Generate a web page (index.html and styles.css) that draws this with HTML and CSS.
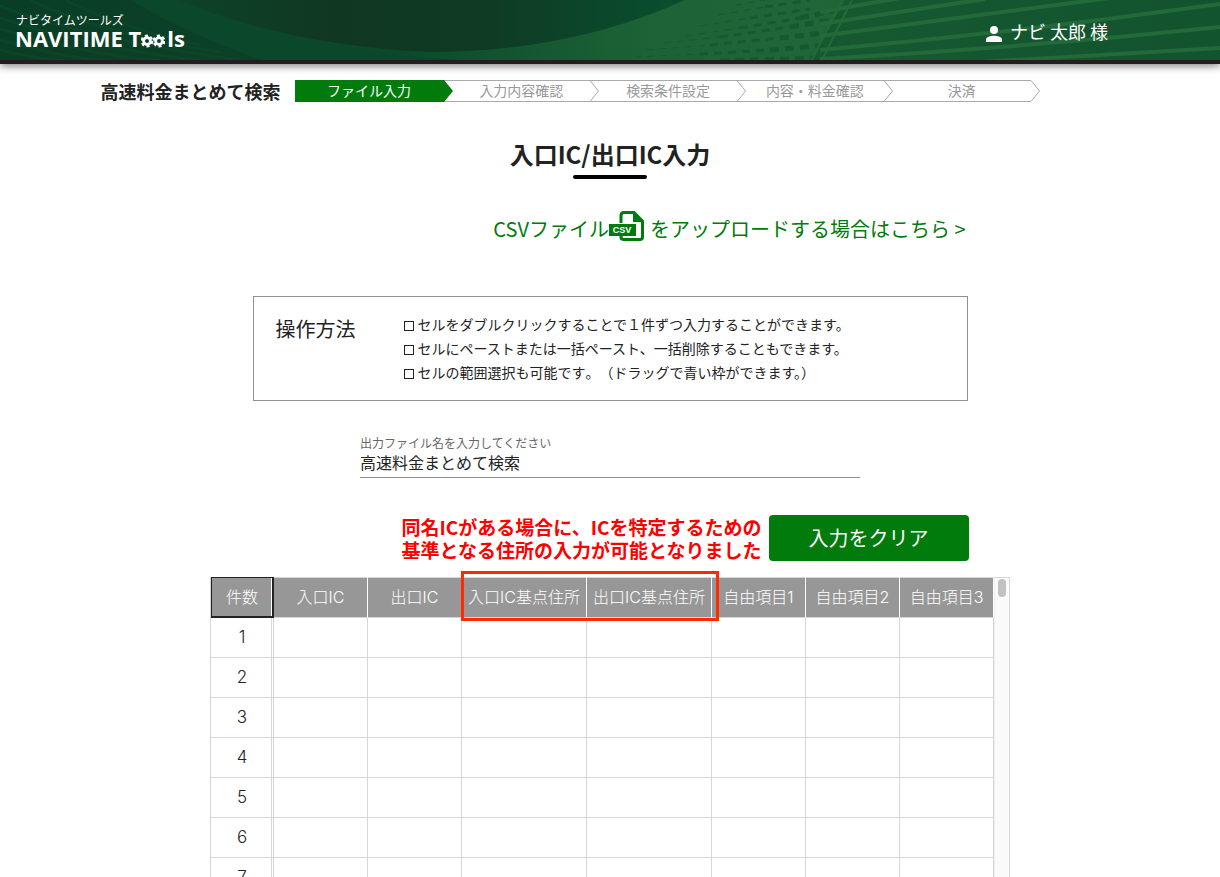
FILE: index.html
```html
<!DOCTYPE html>
<html lang="ja">
<head>
<meta charset="utf-8">
<title>高速料金まとめて検索 - NAVITIME Tools</title>
<link rel="stylesheet" href="styles.css">
</head>
<body>
<header class="site-header">
  <svg class="site-header-art" viewBox="0 0 1220 60" preserveAspectRatio="none" aria-hidden="true">
    <defs>
      <linearGradient id="left" x1="0" x2="1"><stop offset="0" stop-color="#0a3d25"/><stop offset="1" stop-color="#0b4029"/></linearGradient>
      <linearGradient id="bowl" x1="0" x2="1"><stop offset="0" stop-color="#0c4328"/><stop offset=".3" stop-color="#103722"/><stop offset=".6" stop-color="#0f3a24"/><stop offset="1" stop-color="#08502f"/></linearGradient>
      <linearGradient id="right" gradientUnits="userSpaceOnUse" x1="400" y1="0" x2="1220" y2="0"><stop offset="0" stop-color="#0a4a2b"/><stop offset=".3" stop-color="#1d6236"/><stop offset=".5" stop-color="#206638"/><stop offset=".7" stop-color="#175b33"/><stop offset="1" stop-color="#0e4f2e"/></linearGradient>
    </defs>
    <rect width="1220" height="60" fill="url(#right)"/>
    <path d="M0 0H130Q190 35 262 60H0Z" fill="url(#left)"/>
    <path d="M130 0H190Q300 50 460 60H262Q190 35 130 0Z" fill="#0b482b"/>
    <path d="M178 0H685Q570 52 430 52Q290 46 178 0Z" fill="url(#bowl)"/>
    <g fill="none" stroke="#0c492b" stroke-width="3" opacity=".65">
      <path d="M0 50Q40 60 80 62M0 40Q60 58 120 62M0 29Q80 54 170 62M0 18Q90 48 210 62M0 6Q90 40 240 60M30 0Q100 34 220 52M65 0Q120 28 200 45"/>
    </g>
    <g fill="none" stroke="#16592f">
      <g stroke-width="1" stroke-dasharray="7 6">
        <path d="M634 57L700 54M646 50L710 45M664 43L720 37M686 36L740 28M700 26L750 18M718 15L765 7M735 5L765 0"/>
      </g>
      <g stroke-width="3" stroke-dasharray="8 6">
        <path d="M700 54L770 50M710 45L780 38M720 37L790 27M740 28L800 18M750 18L810 9M765 7L810 0"/>
      </g>
      <g stroke-width="5" stroke-dasharray="9 6">
        <path d="M720 61L850 57M770 50L850 43M780 38L850 30M790 27L850 17M800 18L850 7"/>
      </g>
    </g>
    <path d="M845 0H1220V60H812Z" fill="#14562f" opacity=".75"/>
    <g fill="none" stroke="#226a39" stroke-width="4">
      <path d="M820 12L900 -2M820 24L985 -1M820 36L1110 -2M820 50Q1020 32 1220 4M820 59Q1020 48 1220 27M980 62L1220 48"/>
      <path d="M822 60L852 0M812 60L842 0" stroke-width="2"/>
    </g>
  </svg>
  <a class="logo" href="#">
    <span class="logo-kana">ナビタイムツールズ</span>
    <span class="logo-name">NAVITIME T<svg class="logo-gears" viewBox="0 0 24 14" role="img" aria-label="oo"><g fill="none" stroke="#fff"><circle cx="6" cy="7" r="3.400" stroke-width="2.800"/><circle cx="6" cy="7" r="5.200" stroke-width="2.400" stroke-dasharray="3 2.450"/><circle cx="18" cy="7" r="3.400" stroke-width="2.800"/><circle cx="18" cy="7" r="5.200" stroke-width="2.400" stroke-dasharray="3 2.450"/></g></svg>ls</span>
  </a>
  <div class="user">
    <svg class="user-icon" viewBox="0 0 16 16" aria-hidden="true"><circle cx="8" cy="4" r="4"/><path d="M0 16V13.500C0 11 4.500 9.800 8 9.800S16 11 16 13.500V16Z"/></svg>
    <span>ナビ 太郎 様</span>
  </div>
</header>

<div class="progress">
  <p class="progress-title">高速料金まとめて検索</p>
  <ol class="steps">
    <li class="step step-current" aria-current="step"><span class="step-label">ファイル入力</span><svg class="step-tip" viewBox="0 0 9 22" aria-hidden="true"><path class="tip-line" d="M0 .5H9M0 21.500H9"/><path class="tip-fill" d="M0 0L9 11L0 22Z"/></svg></li>
    <li class="step"><span class="step-label">入力内容確認</span><svg class="step-tip" viewBox="0 0 9 22" aria-hidden="true"><path class="tip-line" d="M0 .5H9M0 21.500H9M0 .5L8.500 11L0 21.500"/></svg></li>
    <li class="step"><span class="step-label">検索条件設定</span><svg class="step-tip" viewBox="0 0 9 22" aria-hidden="true"><path class="tip-line" d="M0 .5H9M0 21.500H9M0 .5L8.500 11L0 21.500"/></svg></li>
    <li class="step"><span class="step-label">内容・料金確認</span><svg class="step-tip" viewBox="0 0 9 22" aria-hidden="true"><path class="tip-line" d="M0 .5H9M0 21.500H9M0 .5L8.500 11L0 21.500"/></svg></li>
    <li class="step"><span class="step-label">決済</span><svg class="step-tip" viewBox="0 0 9 22" aria-hidden="true"><path class="tip-line" d="M0 .5L8.500 11L0 21.500"/></svg></li>
  </ol>
</div>

<main class="main">
  <h1 class="page-title">入口IC/出口IC入力</h1>

  <a class="csv-link" href="#">
    <span>CSVファイル</span>
    <svg class="csv-icon" viewBox="0 0 36 30" aria-hidden="true">
      <path d="M12 12V4.500Q12 1.500 15 1.500H25L33.500 10V26Q33.500 28.500 31 28.500H15Q12 28.500 12 26V24" fill="none" stroke="#007b0c" stroke-width="3"/>
      <path d="M24 1V11H34Z" fill="#007b0c"/>
      <rect y="13" width="27" height="12" fill="#007b0c"/>
      <text x="13" y="22" text-anchor="middle">CSV</text>
    </svg>
    <span class="csv-rest">をアップロードする場合はこちら &gt;</span>
  </a>

  <section class="howto">
    <h2 class="howto-title">操作方法</h2>
    <ul class="howto-list">
      <li>セルをダブルクリックすることで１件ずつ入力することができます。</li>
      <li>セルにペーストまたは一括ペースト、一括削除することもできます。</li>
      <li><span>セルの範囲選択も可能です<span class="full-width">。（</span>ドラッグで青い枠ができます。）</span></li>
    </ul>
  </section>

  <div class="field">
    <label for="filename">出力ファイル名を入力してください</label>
    <input id="filename" type="text" value="高速料金まとめて検索">
  </div>

  <div class="actions">
    <p class="notice">同名ICがある場合に、ICを特定するための<br>基準となる住所の入力が可能となりました</p>
    <button class="clear" type="button">入力をクリア</button>
  </div>

  <div class="sheet">
    <table class="grid">
      <colgroup><col class="col-no"><col class="col-std"><col class="col-std"><col class="col-wide"><col class="col-wide"><col class="col-std"><col class="col-std"><col class="col-std"></colgroup>
      <thead>
        <tr><th scope="col">件数</th><th scope="col">入口IC</th><th scope="col">出口IC</th><th scope="col">入口IC基点住所</th><th scope="col">出口IC基点住所</th><th scope="col">自由項目1</th><th scope="col">自由項目2</th><th scope="col">自由項目3</th></tr>
      </thead>
      <tbody>
        <tr><th scope="row">1</th><td></td><td></td><td></td><td></td><td></td><td></td><td></td></tr>
        <tr><th scope="row">2</th><td></td><td></td><td></td><td></td><td></td><td></td><td></td></tr>
        <tr><th scope="row">3</th><td></td><td></td><td></td><td></td><td></td><td></td><td></td></tr>
        <tr><th scope="row">4</th><td></td><td></td><td></td><td></td><td></td><td></td><td></td></tr>
        <tr><th scope="row">5</th><td></td><td></td><td></td><td></td><td></td><td></td><td></td></tr>
        <tr><th scope="row">6</th><td></td><td></td><td></td><td></td><td></td><td></td><td></td></tr>
        <tr><th scope="row">7</th><td></td><td></td><td></td><td></td><td></td><td></td><td></td></tr>
      </tbody>
    </table>
    <div class="scroll-track"><div class="scroll-thumb"></div></div>
    <div class="highlight"></div>
  </div>
</main>
</body>
</html>
```

FILE: styles.css
```css
*, ::before, ::after { box-sizing: border-box; }

html { overflow: hidden; }

body {
  margin: 0;
  color: #222;
  background: #fff;
  font-family: "Noto Sans CJK JP", sans-serif;
  font-size: 16px;
}

h1, h2, p, ol, ul { margin: 0; padding: 0; }
ol, ul { list-style: none; }
a { text-decoration: none; }

/* Header */
.site-header {
  position: relative;
  display: flex;
  justify-content: space-between;
  height: 64px;
  padding: 0 112px 0 15px;
  border-bottom: 4px solid #231f20;
  box-shadow: 0 2px 8px rgba(0, 0, 0, .5);
  color: #fff;
}

.site-header-art {
  position: absolute;
  inset: 0;
  width: 100%;
  height: 100%;
}

.logo {
  position: relative;
  display: flex;
  flex-direction: column;
  padding-top: 12px;
  color: #fff;
}

.logo-kana { padding-left: 1px; font-size: 12px; line-height: 16px; }

.logo-name {
  font: bold 22px/20px "Open Sans", sans-serif;
  white-space: nowrap;
}

.logo-gears { width: 24px; height: 14px; vertical-align: -1px; margin-right: 2px; }

.user {
  position: relative;
  display: flex;
  align-items: center;
  gap: 8px;
  padding-top: 2px;
  font-size: 18px;
}

.user-icon { width: 16px; height: 16px; margin-top: 6px; fill: #fff; }

/* Progress */
.progress {
  display: flex;
  justify-content: center;
  align-items: center;
  gap: 14px;
  padding: 14px 80px 0 0;
  width: 100%;
  max-width: 1220px;
  margin: 0 auto;
}

.progress-title { font-size: 18px; font-weight: bold; line-height: 26px; white-space: nowrap; }

.steps {
  display: grid;
  grid-template-columns: 158px repeat(4, 1fr);
  width: 745px;
}

.step { display: flex; height: 22px; color: #999; font-size: 14px; }

.step-label {
  flex: 1;
  border: solid #aaa;
  border-width: 1px 0;
  line-height: 18px;
  text-align: center;
}

.step-current .step-label { background: #007b0c; border-color: #007b0c; color: #fff; }
.step-tip { width: 9px; height: 22px; }
.tip-line { fill: none; stroke: #aaa; }
.tip-fill { fill: #007b0c; }

/* Main */
.main {
  display: flex;
  flex-direction: column;
  align-items: center;
}

.page-title {
  display: flex;
  flex-direction: column;
  align-items: center;
  margin-top: 34px;
  font-size: 24px;
  line-height: 32px;
}

.page-title::after {
  content: "";
  width: 74px;
  height: 4px;
  margin-top: 5px;
  border-radius: 2px;
  background: #000;
}

.csv-link {
  display: flex;
  align-items: flex-start;
  justify-content: flex-end;
  width: 715px;
  margin-top: 32px;
  padding-right: 2px;
  color: #007b0c;
  font-size: 20px;
  line-height: 36px;
}

.csv-icon { width: 36px; height: 30px; }
.csv-icon text { font: bold 9px "Liberation Sans", sans-serif; fill: #fff; }
.csv-rest { margin-left: 5px; }

.howto {
  display: flex;
  width: 715px;
  margin-top: 49px;
  padding: 15px 22px 16px;
  border: 1px solid #909090;
}

.howto-title { width: 128px; font-size: 20px; font-weight: normal; line-height: 34px; }
.howto-list { font-size: 14px; line-height: 24px; }
.howto-list li { display: flex; align-items: center; gap: 4px; }
.howto-list li::before { content: ""; width: 10px; height: 10px; margin-top: 4px; border: 1px solid #222; }
.full-width { text-spacing-trim: space-all; }

.field { display: flex; flex-direction: column; width: 500px; margin-top: 34px; }
.field label { color: #666; font-size: 12px; line-height: 16px; }

.field input {
  height: 27px;
  padding: 0 0 4px;
  border: 0;
  border-bottom: 1px solid #909090;
  background: none;
  color: #222;
  font: inherit;
  line-height: 22px;
}

.actions {
  display: flex;
  align-items: center;
  justify-content: flex-end;
  gap: 7px;
  width: 717px;
  margin-top: 37px;
}

.notice { color: #f00; font-size: 19px; font-weight: bold; line-height: 23px; white-space: nowrap; }

.clear {
  width: 200px;
  height: 46px;
  padding: 0 0 2px;
  border: 0;
  border-radius: 4px;
  background: #007b0c;
  color: #fff;
  font: 20px "Noto Sans CJK JP", sans-serif;
}

/* Sheet */
.sheet { position: relative; display: flex; width: 800px; margin-top: 16px; }

.grid {
  width: 784px;
  border-collapse: separate;
  border-spacing: 0;
  border-left: 1px solid #d6d6d6;
  table-layout: fixed;
  font-family: Inter, "Noto Sans CJK JP", sans-serif;
}

.col-no { width: 63px; }
.col-std { width: 94px; }
.col-wide { width: 125px; }

.grid th, .grid td {
  height: 40px;
  padding: 0 0 2px;
  border: solid #d6d6d6;
  border-width: 0 1px 1px 0;
  font-weight: 300;
  line-height: 24px;
  text-align: center;
  white-space: nowrap;
}

.grid thead th {
  height: 41px;
  border-top-width: 1px;
  border-right-color: #fff;
  background: #979797;
  color: #fff;
}

.grid thead th:first-child {
  padding: 0;
  border: solid #222;
  border-width: 1px 2px 2px 1px;
  box-shadow: inset -1px 0 #fff;
}

.grid tbody th { padding-left: 2px; border-right: 3px double #d6d6d6; font-size: 17px; }

.scroll-track {
  flex: 1;
  padding: 1px 3px;
  border: 1px solid #d6d6d6;
  border-left-color: #eee;
  background: #fafafa;
}

.scroll-thumb { width: 8px; height: 18px; border-radius: 4px; background: #c1c1c1; }

.highlight {
  position: absolute;
  top: -6px;
  left: 251px;
  width: 258px;
  height: 50px;
  border: 3px solid #ff2a00;
}
```
